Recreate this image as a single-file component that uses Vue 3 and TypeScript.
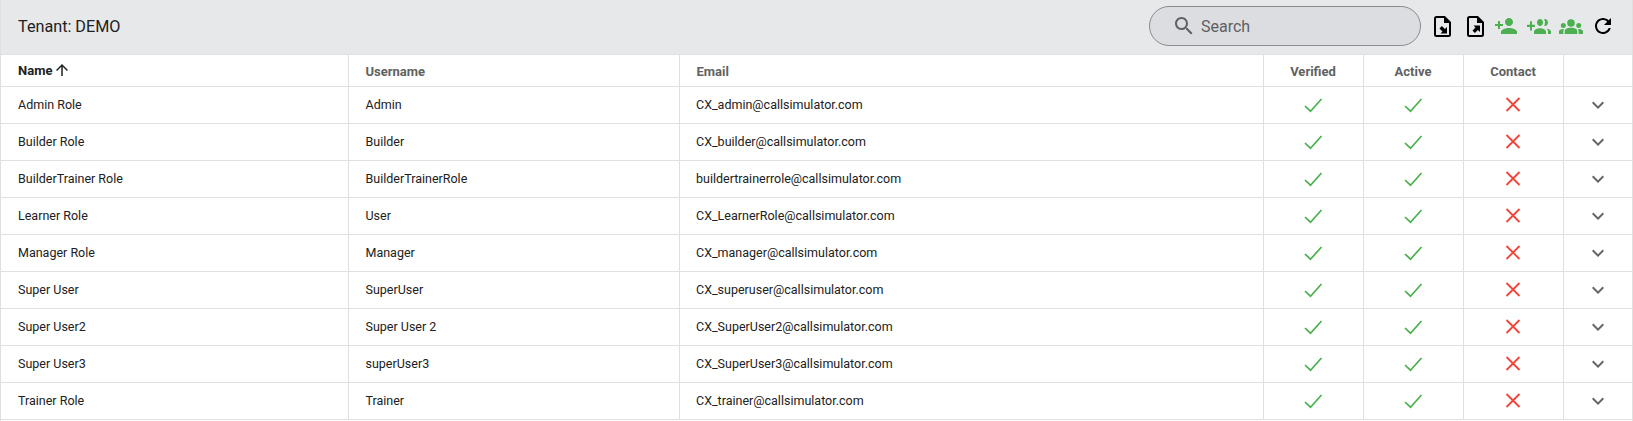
<script setup lang="ts">
interface Row { name: string; username: string; email: string }
const rows: Row[] = [
  { name: 'Admin Role', username: 'Admin', email: 'CX_admin@callsimulator.com' },
  { name: 'Builder Role', username: 'Builder', email: 'CX_builder@callsimulator.com' },
  { name: 'BuilderTrainer Role', username: 'BuilderTrainerRole', email: 'buildertrainerrole@callsimulator.com' },
  { name: 'Learner Role', username: 'User', email: 'CX_LearnerRole@callsimulator.com' },
  { name: 'Manager Role', username: 'Manager', email: 'CX_manager@callsimulator.com' },
  { name: 'Super User', username: 'SuperUser', email: 'CX_superuser@callsimulator.com' },
  { name: 'Super User2', username: 'Super User 2', email: 'CX_SuperUser2@callsimulator.com' },
  { name: 'Super User3', username: 'superUser3', email: 'CX_SuperUser3@callsimulator.com' },
  { name: 'Trainer Role', username: 'Trainer', email: 'CX_trainer@callsimulator.com' },
]
</script>

<template>
  <div class="page">
    <header class="toolbar">
      <div class="title">Tenant: DEMO</div>
      <div class="search">
        <svg class="search-icon" viewBox="0 0 24 24"><path d="M15.5 14h-.79l-.28-.27C15.41 12.59 16 11.11 16 9.5 16 5.91 13.09 3 9.5 3S3 5.91 3 9.5 5.91 16 9.5 16c1.61 0 3.09-.59 4.23-1.57l.27.28v.79l5 4.99L20.49 19l-4.99-5zm-6 0C7.01 14 5 11.99 5 9.5S7.01 5 9.5 5 14 7.01 14 9.5 11.99 14 9.5 14z" /></svg>
        <span>Search</span>
      </div>
      <div class="actions">
        <svg class="doc" viewBox="0 0 17 21"><path d="M2.500 1h8L16 6.500V18.500a1.500 1.500 0 0 1-1.500 1.500h-12A1.500 1.500 0 0 1 1 18.500v-16A1.500 1.500 0 0 1 2.500 1z" fill="none" stroke="#000" stroke-width="2" /><path d="M10 1v6h6z" fill="#000" /><path d="M13 17.500H6.500l2-2.100-3-3 2.400-2.400 3 3 2.100-2z" fill="#000" /></svg>
        <svg class="doc doc2" viewBox="0 0 17 21"><path d="M2.500 1h8L16 6.500V18.500a1.500 1.500 0 0 1-1.500 1.500h-12A1.500 1.500 0 0 1 1 18.500v-16A1.500 1.500 0 0 1 2.500 1z" fill="none" stroke="#000" stroke-width="2" /><path d="M10 1v6h6z" fill="#000" /><path d="M13 9.500V16l-2.100-2-3 3-2.400-2.400 3-3-2-2.100z" fill="#000" /></svg>
        <svg class="grn add1" viewBox="0 0 24 24"><path d="M15 12c2.210 0 4-1.790 4-4s-1.790-4-4-4-4 1.790-4 4 1.790 4 4 4zm-9-2V7H4v3H1v2h3v3h2v-3h3v-2H6zm9 4c-2.670 0-8 1.340-8 4v2h16v-2c0-2.660-5.330-4-8-4z" /></svg>
        <svg class="grn add2" viewBox="0 5 24 13" preserveAspectRatio="none"><path d="M8 10H5V7H3v3H0v2h3v3h2v-3h3v-2zm10 1c1.660 0 2.990-1.340 2.990-3S19.660 5 18 5c-.32 0-.63.05-.91.14.57.81.9 1.790.9 2.860s-.34 2.040-.9 2.860c.28.09.59.14.91.14zm-5 0c1.660 0 2.990-1.340 2.990-3S14.660 5 13 5s-3 1.340-3 3 1.340 3 3 3zm6.620 2.160c.83.73 1.380 1.660 1.380 2.840v2h3v-2c0-1.540-2.370-2.490-4.380-2.840zM13 13c-2 0-6 1-6 3v2h12v-2c0-2-4-3-6-3z" /></svg>
        <svg class="grn add3" viewBox="0 0 24 15"><circle cx="12" cy="4" r="3.800" /><circle cx="4.300" cy="6.500" r="2.500" /><circle cx="19.700" cy="6.500" r="2.500" /><path d="M12 8.800c2 0 3.600.4 4.700 1 1 .5 1.600 1.400 1.600 2.500V15H5.700v-2.700c0-1.100.6-2 1.600-2.500 1.100-.6 2.700-1 4.700-1zM4 10c.3 0 .6 0 .9.1-.3.600-.5 1.300-.5 2.100V15H0v-2.200c0-.9.500-1.600 1.300-2 .8-.5 1.700-.8 2.700-.8zm16 0c1 0 1.900.3 2.700.8.8.4 1.300 1.100 1.300 2V15h-4.400v-2.800c0-.8-.2-1.500-.5-2.100.3-.1.6-.1.900-.1z" /></svg>
        <svg class="refresh" viewBox="0 0 24 24"><path d="M17.650 6.350C16.200 4.900 14.210 4 12 4c-4.420 0-7.990 3.580-7.990 8s3.570 8 7.990 8c3.730 0 6.840-2.550 7.730-6h-2.080c-.82 2.330-3.040 4-5.650 4-3.310 0-6-2.690-6-6s2.690-6 6-6c1.660 0 3.140.69 4.220 1.780L13 11h7V4l-2.350 2.350z" /></svg>
      </div>
    </header>
    <table class="grid">
      <colgroup>
        <col class="c-name" /><col class="c-user" /><col class="c-mail" />
        <col class="c-flag" /><col class="c-flag" /><col class="c-flag" /><col />
      </colgroup>
      <thead>
        <tr>
          <th class="sorted">Name<svg class="arrow" viewBox="0 0 24 24"><path d="M4 12l1.410 1.410L11 7.830V20h2V7.830l5.580 5.590L20 12l-8-8-8 8z" /></svg></th>
          <th>Username</th>
          <th class="mail">Email</th>
          <th class="center">Verified</th>
          <th class="center">Active</th>
          <th class="center">Contact</th>
          <th></th>
        </tr>
      </thead>
      <tbody>
        <tr v-for="row in rows" :key="row.name">
          <td>{{ row.name }}</td>
          <td>{{ row.username }}</td>
          <td class="mail">{{ row.email }}</td>
          <td class="center"><svg class="mark" viewBox="0 0 20 20"><path d="M2 11l5.500 5.200L18.500 4" fill="none" stroke="#4caf50" stroke-width="1.700" /></svg></td>
          <td class="center"><svg class="mark" viewBox="0 0 20 20"><path d="M2 11l5.500 5.200L18.500 4" fill="none" stroke="#4caf50" stroke-width="1.700" /></svg></td>
          <td class="center"><svg class="mark" viewBox="0 0 20 20"><path d="M3.500 3l13 13M16.500 3L3.500 16" fill="none" stroke="#f44336" stroke-width="1.800" /></svg></td>
          <td class="center"><svg class="chev" viewBox="0 0 24 24"><path d="M16.590 8.590L12 13.170 7.410 8.590 6 10l6 6 6-6z" /></svg></td>
        </tr>
      </tbody>
    </table>
  </div>
</template>

<style>
html, body { margin: 0; background: #fff; }
</style>

<style scoped>
.page {
  width: 1633px;
  height: 421px;
  box-sizing: border-box;
  overflow: hidden;
  border-left: 1px solid #e0e0e0;
  border-right: 1px solid #e0e0e0;
  font-family: Roboto, "Liberation Sans", sans-serif;
  color: #212121;
}
.toolbar {
  height: 54px;
  box-sizing: border-box;
  display: flex;
  align-items: center;
  background: #e7e8ea;
  padding-left: 17px;
  padding-bottom: 2px;
}
.title { font-size: 16.2px; flex: 1; }
.search {
  width: 272px;
  height: 40px;
  box-sizing: border-box;
  display: flex;
  align-items: center;
  gap: 5px;
  padding-left: 22px;
  border: 1px solid #8b8c8e;
  border-radius: 20px;
  background: #dcdde0;
  color: #5f6063;
  font-size: 16px;
}
.search-icon { width: 24px; height: 24px; fill: #616161; }
.actions { display: flex; align-items: center; width: 211px; padding-left: 13px; box-sizing: border-box; }
.doc { width: 17px; height: 21px; }
.doc2 { margin-left: 16px; }
.grn { fill: #4caf50; width: 24px; height: 24px; }
.add1 { margin-left: 10px; }
.add2 { margin-left: 9px; height: 15px; }
.add3 { margin-left: 8px; height: 15px; }
.refresh { width: 24px; height: 24px; margin-left: 8px; fill: #000; }
.grid {
  width: 1631px;
  table-layout: fixed;
  border-collapse: collapse;
  font-size: 12.5px;
}
.c-name { width: 347px; }
.c-user { width: 331px; }
.c-mail { width: 584px; }
.c-flag { width: 100px; }
th, td {
  box-sizing: border-box;
  padding: 0 0 0 17px;
  border-bottom: 1px solid #e0e0e0;
  border-right: 1px solid #e0e0e0;
  text-align: left;
  vertical-align: middle;
}
th:last-child, td:last-child { border-right: 0; }
th {
  height: 32px;
  padding-top: 2px;
  font-size: 13px;
  font-weight: 700;
  color: #616161;
  border-top: 1px solid #e0e0e0;
}
th.sorted { color: #212121; }
td { height: 37px; padding-bottom: 2px; }
th.mail { padding-left: 17px; }
td.mail { padding-left: 16.5px; }
th.center, td.center { padding-left: 0; text-align: center; }
td.center { padding-bottom: 0; }
svg { vertical-align: middle; }
.arrow { width: 18px; height: 18px; fill: #212121; margin-left: 1px; position: relative; top: -2px; }
.mark { width: 20px; height: 20px; display: inline-block; }
.chev { width: 24px; height: 24px; fill: #666; }
</style>
